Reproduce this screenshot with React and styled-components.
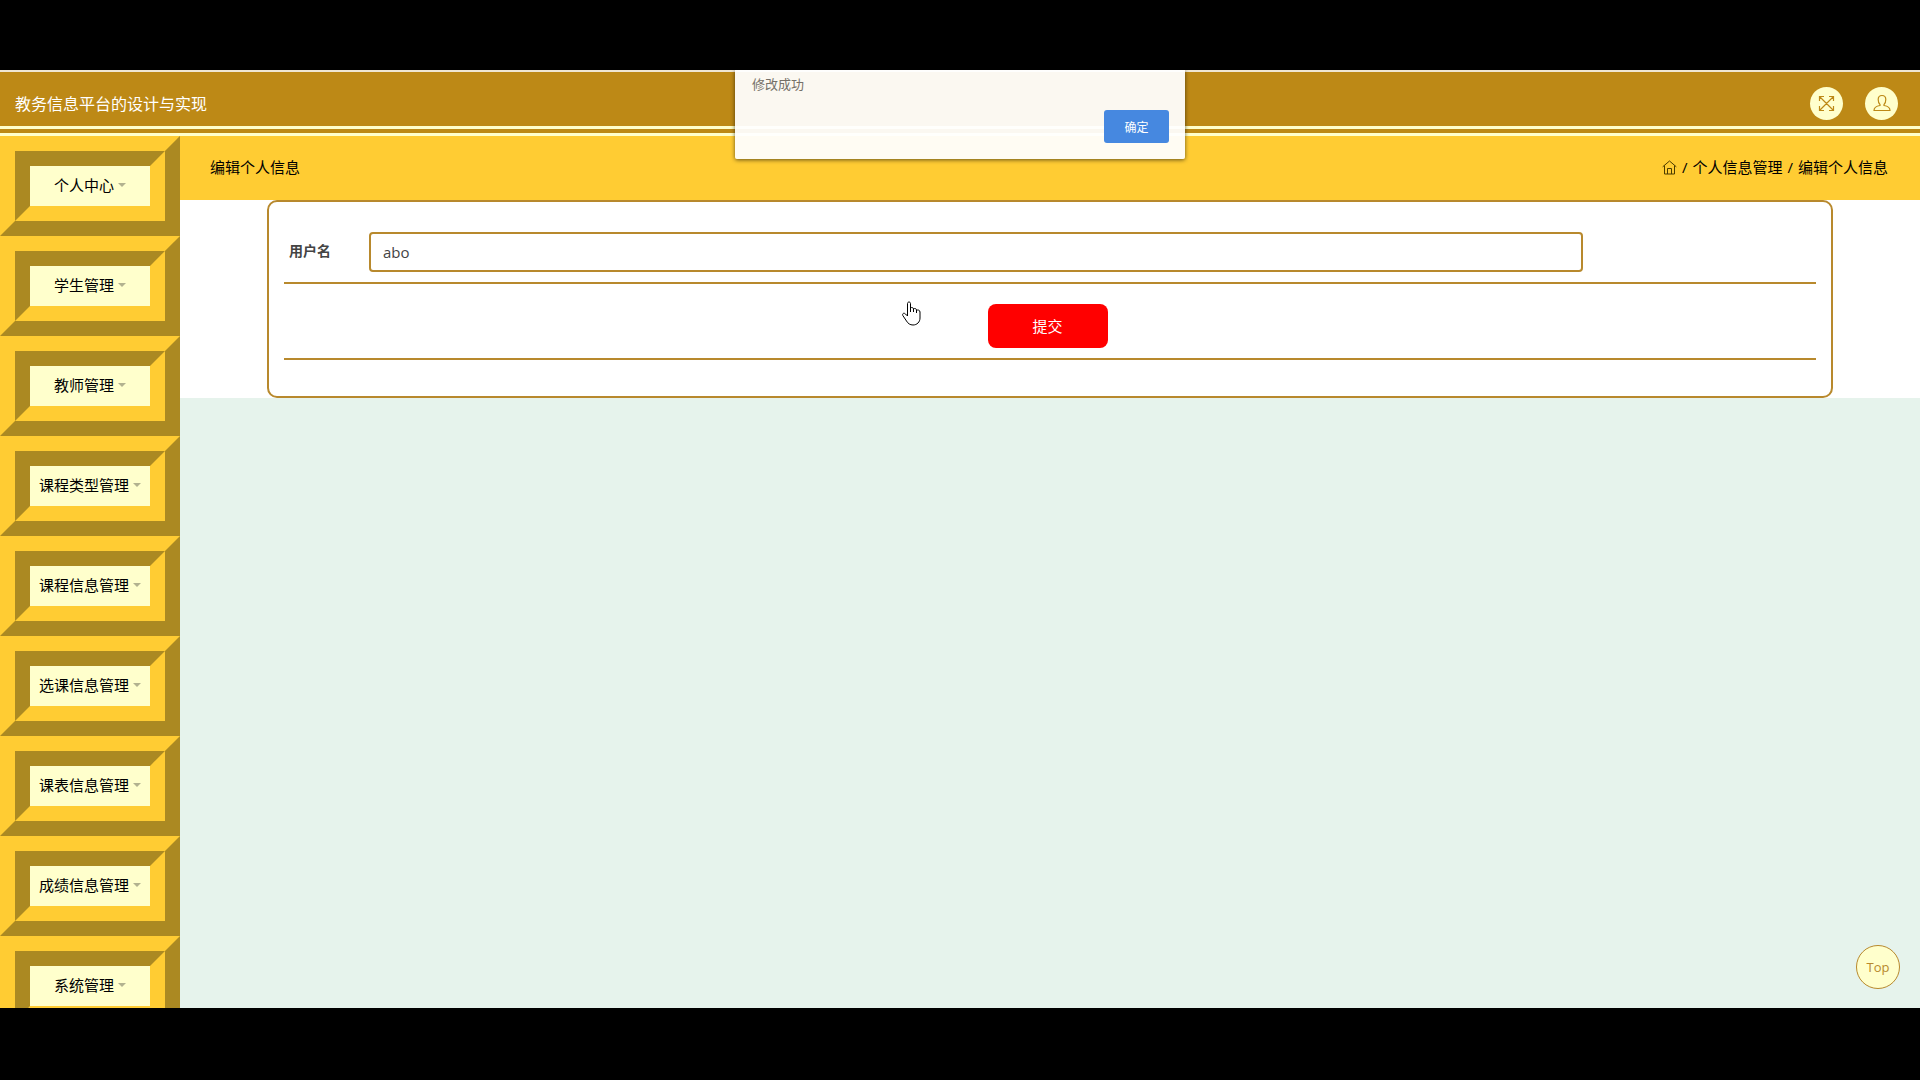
import React from 'react';
import styled, { createGlobalStyle } from 'styled-components';

const GlobalStyle = createGlobalStyle`
  *,
  *::before,
  *::after {
    box-sizing: border-box;
  }

  body {
    margin: 0;
    background: #000000;
    color: #000000;
    font-family: 'Open Sans', 'Noto Sans CJK SC', sans-serif;
    font-size: 15px;
    line-height: 24px;
  }

  button,
  input {
    font: inherit;
  }
`;

const Stage = styled.div`
  display: flex;
  flex-direction: column;
  height: 100vh;
  padding: 70px 0 72px;
`;

const Screen = styled.div`
  position: relative;
  flex: 1;
  min-height: 0;
  display: flex;
  flex-direction: column;
  overflow: hidden;
  background: #e6f3ec;
`;

const Header = styled.header`
  display: flex;
  flex: none;
  align-items: center;
  justify-content: space-between;
  height: 66px;
  padding: 8px 22px 0 15px;
  background: #bd8916;
  border-top: 2px solid #efe6d2;
  border-bottom: 10px double #ffffcc;
`;

const Title = styled.h1`
  margin: 0;
  padding-top: 2px;
  color: #ffffff;
  font-size: 16px;
  font-weight: 400;
  line-height: 24px;
`;

const HeaderActions = styled.div`
  display: flex;
  gap: 22px;
`;

const RoundButton = styled.button`
  display: flex;
  align-items: center;
  justify-content: center;
  width: 33px;
  height: 33px;
  padding: 0;
  border: none;
  border-radius: 50%;
  background: #ffffcc;
  color: #bd8916;
  cursor: pointer;
`;

const Body = styled.div`
  display: flex;
  flex: 1;
  min-height: 0;
`;

const Sidebar = styled.nav`
  flex: none;
  width: 180px;
  overflow: hidden;
`;

const MenuItem = styled.button`
  display: flex;
  align-items: center;
  justify-content: center;
  gap: 4px;
  width: 100%;
  height: 100px;
  padding: 0 0 2px;
  border: 30px ridge #ffcc33;
  background: #ffffcc;
  color: #000000;
  white-space: nowrap;
  cursor: pointer;
`;

const Caret = styled.span`
  border: 4px solid transparent;
  border-top-color: #b2b28f;
  border-bottom: none;
`;

const Main = styled.main`
  flex: 1;
  min-width: 0;
`;

const Breadcrumb = styled.div`
  display: flex;
  align-items: center;
  justify-content: space-between;
  height: 64px;
  padding: 0 32px 2px 30px;
  background: #ffcc33;
`;

const PageTitle = styled.h2`
  margin: 0;
  font-size: 15px;
  font-weight: 400;
  line-height: 24px;
`;

const Crumbs = styled.div`
  display: flex;
  align-items: center;
  gap: 5px;

  a {
    display: flex;
    color: #4d3d00;
    text-decoration: none;
  }
`;

const FormArea = styled.section`
  padding: 0 5%;
  background: #ffffff;
`;

const Form = styled.form`
  padding: 30px 15px 36px;
  border: 2px solid #b8892d;
  border-radius: 10px;
`;

const FormRow = styled.div`
  display: flex;
  align-items: center;
  border-bottom: 2px solid #b8892d;
`;

const FieldRow = styled(FormRow)`
  padding: 0 10px 10px 5px;

  label {
    flex: none;
    width: 80px;
    padding-bottom: 2px;
    color: #444444;
    font-size: 14px;
    font-weight: 700;
  }
`;

const TextInput = styled.input`
  width: 80%;
  height: 40px;
  padding: 0 12px;
  border: 2px solid #b8892d;
  border-radius: 4px;
  background: #ffffff;
  color: #444444;
  outline: none;
`;

const SubmitRow = styled(FormRow)`
  justify-content: center;
  padding: 20px 5px 10px 0;
`;

const SubmitButton = styled.button`
  width: 120px;
  height: 44px;
  padding: 0;
  border: none;
  border-radius: 8px;
  background: #ff0000;
  color: #ffffff;
  cursor: pointer;
`;

const Dialog = styled.div`
  position: absolute;
  top: 0;
  left: 50%;
  display: flex;
  flex-direction: column;
  justify-content: space-between;
  width: 450px;
  height: 89px;
  padding: 2px 16px 16px 17px;
  transform: translateX(-50%);
  border-radius: 0 0 2px 2px;
  background: rgba(255, 255, 255, 0.94);
  box-shadow: 0 1px 4px rgba(0, 0, 0, 0.6);
  color: #757068;
  font-size: 13px;

  p {
    margin: 0;
  }

  button {
    align-self: flex-end;
    width: 65px;
    height: 33px;
    padding: 2px 0 0;
    border: none;
    border-radius: 3px;
    background: #4688e0;
    color: #ffffff;
    font-size: 12px;
  }
`;

const TopButton = styled.button`
  position: absolute;
  right: 20px;
  bottom: 19px;
  width: 44px;
  height: 44px;
  padding: 0;
  border: 1px solid #b8892d;
  border-radius: 50%;
  background: #ffffcc;
  color: #b8892d;
  font-size: 13px;
  cursor: pointer;
`;

const Pointer = styled.svg`
  position: absolute;
  top: 231px;
  left: 902px;
`;

const menu = [
  '个人中心',
  '学生管理',
  '教师管理',
  '课程类型管理',
  '课程信息管理',
  '选课信息管理',
  '课表信息管理',
  '成绩信息管理',
  '系统管理',
];

const ExpandIcon = () => (
  <svg width="17" height="17" viewBox="0 0 17 17" fill="none" stroke="currentColor" strokeWidth="1.2" aria-hidden="true">
    <path d="M1.500 6V1.500H6M11 1.500h4.500V6M15.500 11v4.500H11M6 15.500H1.500V11M1.500 1.500l14 14M15.500 1.500l-14 14" />
  </svg>
);

const UserIcon = () => (
  <svg width="18" height="18" viewBox="0 0 18 18" fill="none" stroke="currentColor" strokeWidth="1.2" aria-hidden="true">
    <path d="M7 10.500C5.700 9.400 5.200 7.600 5.200 5.500 5.200 2.800 6.700 1.500 9 1.500s3.800 1.300 3.800 4c0 2.100-.5 3.900-1.800 5v1c3 .5 6 1.500 6 5H1c0-3.500 3-4.500 6-5z" />
  </svg>
);

const HomeIcon = () => (
  <svg width="15" height="15" viewBox="0 0 15 15" fill="none" stroke="currentColor" aria-hidden="true">
    <path d="M.7 6.800 7.500 1l6.800 5.800M2.500 5.500v8.500h10V5.500M5.500 14V8.500h4V14" />
  </svg>
);

export default function App() {
  return (
    <>
      <GlobalStyle />
      <Stage>
        <Screen>
          <Header>
            <Title>教务信息平台的设计与实现</Title>
            <HeaderActions>
              <RoundButton aria-label="全屏">
                <ExpandIcon />
              </RoundButton>
              <RoundButton aria-label="用户">
                <UserIcon />
              </RoundButton>
            </HeaderActions>
          </Header>
          <Body>
            <Sidebar>
              {menu.map((name) => (
                <MenuItem key={name}>
                  {name}
                  <Caret />
                </MenuItem>
              ))}
            </Sidebar>
            <Main>
              <Breadcrumb>
                <PageTitle>编辑个人信息</PageTitle>
                <Crumbs>
                  <a href="#home" aria-label="首页">
                    <HomeIcon />
                  </a>
                  <span>/</span>
                  <span>个人信息管理</span>
                  <span>/</span>
                  <span>编辑个人信息</span>
                </Crumbs>
              </Breadcrumb>
              <FormArea>
                <Form onSubmit={(e) => e.preventDefault()}>
                  <FieldRow>
                    <label htmlFor="username">用户名</label>
                    <TextInput id="username" defaultValue="abo" />
                  </FieldRow>
                  <SubmitRow>
                    <SubmitButton type="submit">提交</SubmitButton>
                  </SubmitRow>
                </Form>
              </FormArea>
            </Main>
          </Body>
          <TopButton>Top</TopButton>
          <Pointer width="20" height="25" viewBox="0 0 20 25" fill="#ffffff" stroke="#000000" aria-hidden="true">
            <path d="M5.500 15V2.500c0-2 3-2 3 0V11 7c1-1 3-.5 3 1v3-3c1-1 3-.5 3 1v3-2.500c1-1 3.500-.5 3.500 1.500v6c0 4-3 7-7 7-3 0-5-1.500-6.500-4L.8 14.500c-.8-2 1.200-3 2.700-1.500z" />
          </Pointer>
          <Dialog role="alertdialog" aria-label="提示">
            <p>修改成功</p>
            <button>确定</button>
          </Dialog>
        </Screen>
      </Stage>
    </>
  );
}
